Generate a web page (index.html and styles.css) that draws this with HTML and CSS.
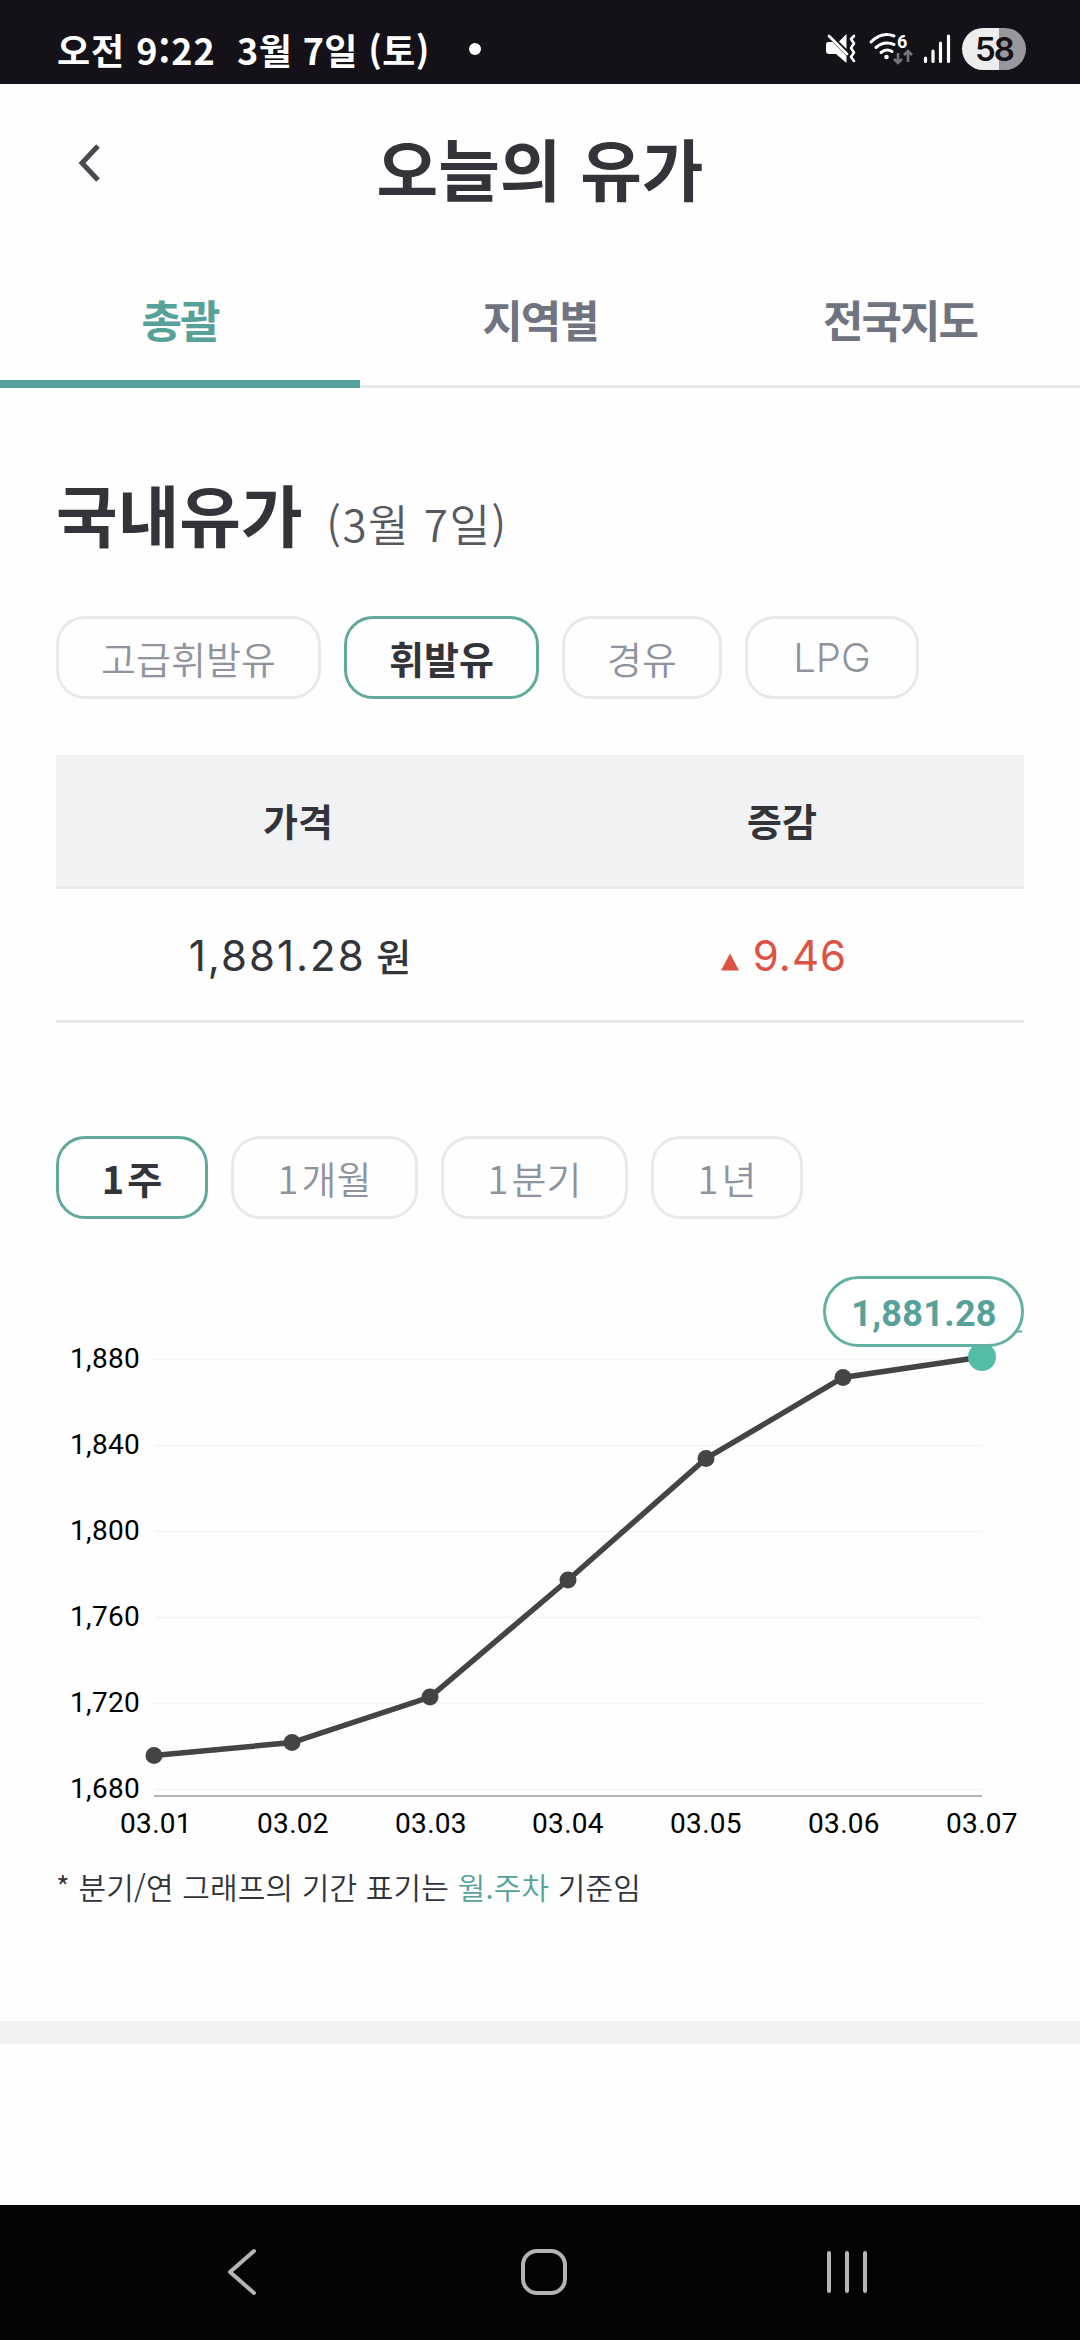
FILE: index.html
```html
<!DOCTYPE html>
<html lang="ko">
<head>
  <meta charset="UTF-8">
  <meta name="viewport" content="width=device-width, initial-scale=1.0">
  <title>오늘의 유가</title>
  <link rel="stylesheet" href="styles.css">
</head>
<body>
  <div class="status-bar">
    <span class="status-time">오전 9:22</span>
    <span class="status-date">3월 7일 (토)</span>
    <span class="status-dot"></span>
    <div class="status-icons">
      <!-- 무음 -->
      <svg class="icon-mute" width="34" height="34" viewBox="0 0 34 34">
        <path d="M4 10h4.500L22.500 24v7L12 22H5Q2 22 2 19v-6Q2 10 4 10z" fill="#fff"/>
        <path d="M22.500 2v15L15 9.500z" fill="#fff"/>
        <path d="M5 4l18 18" stroke="#fff" stroke-width="2.800" stroke-linecap="round"/>
        <path d="M30 4l-3 3 3 4.500-3 4.500 3 4.500-3 4.500 3 4" fill="none" stroke="#fff" stroke-width="2.600" stroke-linecap="round" stroke-linejoin="round"/>
      </svg>
      <!-- 와이파이 -->
      <svg class="icon-wifi" width="46" height="34" viewBox="0 0 46 34">
        <g fill="none" stroke="#fff" stroke-width="3" stroke-linecap="round">
          <path d="M2 10Q13 -1 25 4"/>
          <path d="M7 15.500Q15 8.500 25 12.500"/>
          <path d="M12 20.500Q17.500 16 23 19.500"/>
        </g>
        <circle cx="17.500" cy="25" r="2.300" fill="#fff"/>
        <text x="28" y="16" class="wifi-gen">6</text>
        <path d="M29 21v10m-4-4l4 4 4-4M39 30V19m-4 4l4-4 4 4" fill="none" stroke="#77757b" stroke-width="2.600"/>
      </svg>
      <!-- 신호 세기 -->
      <svg class="icon-signal" width="30" height="32" viewBox="0 0 30 32">
        <path d="M3.500 25v3.500M11 18v10.500M18.500 10v18.500M26.500 3v25.500" stroke="#fff" stroke-width="3.200" stroke-linecap="round"/>
      </svg>
      <span class="battery">58</span>
    </div>
  </div>

  <header class="header">
    <button class="back-button">
      <svg width="26" height="42" viewBox="0 0 26 42">
        <path d="M22 4L6 21l16 17" fill="none" stroke="#46494d" stroke-width="5"/>
      </svg>
    </button>
    <h1>오늘의 유가</h1>
  </header>

  <nav class="tabs">
    <a class="tab active">총괄</a>
    <a class="tab">지역별</a>
    <a class="tab">전국지도</a>
  </nav>

  <main class="content">
    <h2 class="section-title">국내유가 <span>(3월 7일)</span></h2>

    <div class="chips fuel-chips">
      <button class="chip">고급휘발유</button>
      <button class="chip active">휘발유</button>
      <button class="chip">경유</button>
      <button class="chip latin">LPG</button>
    </div>

    <table class="price-table">
      <thead>
        <tr><th>가격</th><th>증감</th></tr>
      </thead>
      <tbody>
        <tr>
          <td><span class="price">1,881.28</span> <span class="won">원</span></td>
          <td class="up"><svg width="18" height="18" viewBox="0 0 19 18"><path d="M9.500 0L19 18H0z"/></svg><span class="diff">9.46</span></td>
        </tr>
      </tbody>
    </table>

    <div class="chips period-chips">
      <button class="chip active"><i>1</i>주</button>
      <button class="chip"><i>1</i>개월</button>
      <button class="chip"><i>1</i>분기</button>
      <button class="chip"><i>1</i>년</button>
    </div>

    <svg class="chart" width="968" height="584" viewBox="0 0 968 584">
      <path class="grid-line" d="M98 99.500H926M98 185.500H926M98 271.500H926M98 357.500H926M98 443.500H926M98 529.500H926"/>
      <path class="axis-line" d="M98 536H926"/>
      <g class="y-label">
        <text x="84" y="108">1,880</text>
        <text x="84" y="194">1,840</text>
        <text x="84" y="280">1,800</text>
        <text x="84" y="366">1,760</text>
        <text x="84" y="452">1,720</text>
        <text x="84" y="538">1,680</text>
      </g>
      <g class="x-label">
        <text x="100" y="573">03.01</text>
        <text x="237" y="573">03.02</text>
        <text x="375" y="573">03.03</text>
        <text x="512" y="573">03.04</text>
        <text x="650" y="573">03.05</text>
        <text x="788" y="573">03.06</text>
        <text x="926" y="573">03.07</text>
      </g>
      <polyline class="price-line" points="98,495.500 236,482.500 374,437 512,320 650,198.500 787,117.500 926,97"/>
      <g class="points">
        <circle cx="98" cy="495.500" r="8.500"/>
        <circle cx="236" cy="482.500" r="8.500"/>
        <circle cx="374" cy="437" r="8.500"/>
        <circle cx="512" cy="320" r="8.500"/>
        <circle cx="650" cy="198.500" r="8.500"/>
        <circle cx="787" cy="117.500" r="8.500"/>
      </g>
      <circle cx="926" cy="97" r="14" fill="#55bca7"/>
      <path d="M960 71.500h6" class="tip-tail"/>
      <rect class="tip-box" x="768.500" y="17.500" width="198" height="68" rx="34"/>
      <text class="tip-text" x="868" y="66">1,881.28</text>
    </svg>

    <p class="notice">* 분기/연 그래프의 기간 표기는 <em>월.주차</em> 기준임</p>
  </main>

  <div class="section-divider"></div>

  <footer class="nav-bar">
    <svg width="32" height="50" viewBox="0 0 32 50">
      <path d="M29 4L5 25l24 21" fill="none" stroke="#b5b5b5" stroke-width="4" stroke-linecap="round" stroke-linejoin="round"/>
    </svg>
    <svg width="50" height="50" viewBox="0 0 50 50">
      <rect x="4" y="4" width="42" height="42" rx="14" fill="none" stroke="#b5b5b5" stroke-width="4"/>
    </svg>
    <svg width="46" height="50" viewBox="0 0 46 50">
      <path d="M5 6v38M23 6v38M41 6v38" stroke="#b5b5b5" stroke-width="4" stroke-linecap="round"/>
    </svg>
  </footer>
</body>
</html>
```
FILE: styles.css
```css
:root {
  --main: #57a298;
  --point: #62a99d;
  --text: #333439;
  --text-gray: #8f939d;
  --tab-gray: #6f7480;
  --line: #e8e9eb;
  --bg-gray: #f0f2f4;
  --red: #dc5243;
}

* {
  box-sizing: border-box;
  margin: 0;
  padding: 0;
}

body {
  display: flex;
  flex-direction: column;
  width: 1080px;
  height: 2340px;
  background: #fefefe;
  color: var(--text);
  font-family: 'Noto Sans CJK KR', sans-serif;
  overflow: hidden;
}

button {
  border: none;
  background: none;
  font-family: inherit;
}

/* 상태 표시줄 */
.status-bar {
  display: flex;
  flex: none;
  align-items: center;
  height: 84px;
  padding: 14px 54px 0 57px;
  background: #141218;
  color: #fff;
  font-size: 36px;
  font-weight: 700;
  line-height: 1;
  white-space: nowrap;
}

.status-time {
  width: 180px;
  letter-spacing: 1px;
}

.status-date {
  width: 193px;
  letter-spacing: 0.4px;
}

.status-dot {
  width: 12px;
  height: 12px;
  margin-left: 39px;
  border-radius: 50%;
  background: #fff;
}

.status-icons {
  display: flex;
  align-items: center;
  margin-left: auto;
}

.icon-wifi {
  margin-left: 11px;
  overflow: visible;
}

.icon-signal {
  margin-left: 7px;
}

.wifi-gen {
  fill: #fff;
  font: 700 18px 'Roboto', sans-serif;
}

.battery {
  width: 64px;
  height: 42px;
  margin-left: 10px;
  border-radius: 21px;
  background: linear-gradient(to right, #ededed 37px, #98979b 37px);
  color: #141218;
  font: 600 33px/43px 'Inter', sans-serif;
  letter-spacing: -2px;
  text-align: center;
}

/* 헤더 */
.header {
  display: grid;
  flex: none;
  grid-template-columns: 180px 1fr 180px;
  align-items: start;
  height: 176px;
}

.back-button {
  padding: 58px 0 0 76px;
  text-align: left;
}

.header h1 {
  font-size: 67px;
  font-weight: 700;
  line-height: 166px;
  text-align: center;
}

.tabs {
  display: flex;
  flex: none;
  height: 128px;
  border-bottom: 3px solid var(--line);
}

.tab {
  flex: 1;
  height: 128px;
  color: var(--tab-gray);
  font-size: 44px;
  font-weight: 700;
  letter-spacing: -2px;
  line-height: 119px;
  text-align: center;
}

.tab.active {
  border-bottom: 8px solid var(--main);
  color: var(--main);
}

/* 본문 */
.content {
  flex: none;
  height: 1633px;
  padding: 71px 56px 0;
}

.section-title {
  height: 110px;
  font-size: 67px;
  font-weight: 700;
  line-height: 108px;
  white-space: nowrap;
}

.section-title span {
  margin-left: 5px;
  color: #57595e;
  font-size: 44px;
  font-weight: 350;
  letter-spacing: 1.5px;
}

.chips {
  display: grid;
  column-gap: 23px;
  height: 83px;
}

.fuel-chips {
  grid-template-columns: 265px 195px 160px 174px;
  margin-top: 47px;
}

.period-chips {
  grid-template-columns: 152px 187px 187px 152px;
  margin-top: 113px;
}

.chip {
  border: 3px solid var(--line);
  border-radius: 29px;
  color: var(--text-gray);
  font-size: 38px;
  font-weight: 350;
  line-height: 71px;
  white-space: nowrap;
}

.chip.active {
  border-color: var(--point);
  color: var(--text);
  font-weight: 700;
}

.chip.latin {
  font-family: 'Inter', sans-serif;
  font-size: 40px;
  font-weight: 300;
  line-height: 77px;
}

.chip i {
  margin-right: 3px;
  font-style: normal;
}

.price-table {
  width: 100%;
  margin-top: 56px;
  border-collapse: separate;
  border-spacing: 0;
  table-layout: fixed;
}

.price-table th,
.price-table td {
  height: 134px;
  padding-bottom: 2px;
  border-bottom: 3px solid var(--line);
  font-size: 38px;
  font-weight: 500;
  line-height: 60px;
  text-align: center;
}

.price-table td {
  padding: 1px 0 0 4px;
}

.price-table th {
  background: var(--bg-gray);
  font-weight: 700;
}

.price,
.diff {
  font-family: 'Inter', sans-serif;
  font-size: 42px;
  font-weight: 400;
  letter-spacing: 2px;
}

.diff {
  letter-spacing: 1px;
}

.price-table .up {
  color: var(--red);
}

.up svg {
  margin-right: 14px;
  fill: var(--red);
}

/* 차트 */
.chart {
  display: block;
  margin-top: 41px;
}

.chart text {
  font-family: 'Roboto', sans-serif;
  font-size: 28px;
  letter-spacing: 0.3px;
}

.grid-line {
  stroke: #f5f5f5;
  stroke-width: 2;
}

.axis-line {
  stroke: #b3b3b3;
  stroke-width: 2;
}

.y-label {
  text-anchor: end;
}

.x-label {
  text-anchor: middle;
}

.price-line {
  fill: none;
  stroke: #444;
  stroke-width: 5.5;
}

.points {
  fill: #444;
}

.tip-box {
  fill: #fff;
  stroke: #62b1a3;
  stroke-width: 3;
}

.tip-tail {
  stroke: #62b1a3;
  stroke-width: 2;
}

.chart .tip-text {
  fill: var(--main);
  font-size: 36px;
  font-weight: 700;
  text-anchor: middle;
}

.notice {
  margin-top: 18px;
  font-size: 30px;
  font-weight: 350;
  letter-spacing: 0.15px;
  line-height: 48px;
}

.notice em {
  color: var(--main);
  font-style: normal;
}

.section-divider {
  flex: none;
  height: 23px;
  background: var(--bg-gray);
}

/* 하단 내비게이션 */
.nav-bar {
  display: flex;
  align-items: center;
  height: 135px;
  margin-top: auto;
  padding: 0 0 2px 225px;
  background: #040406;
}

.nav-bar svg:nth-child(2) {
  margin-left: 262px;
}

.nav-bar svg:nth-child(3) {
  margin-left: 255px;
}
```
